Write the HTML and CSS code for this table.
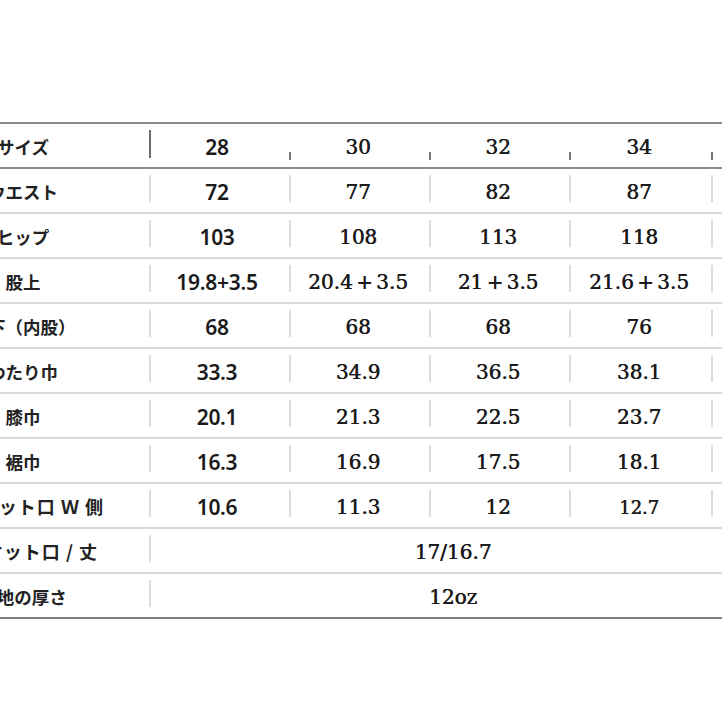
FILE: index.html
```html
<!DOCTYPE html>
<html lang="ja">
<head>
<meta charset="utf-8">
<title>サイズ表</title>
<link rel="stylesheet" href="styles.css">
</head>
<body>
<div class="sheet">
  <div class="table">
    <div class="row head">
      <div class="label">サイズ</div>
      <div class="cell first">28</div>
      <div class="cell">30</div>
      <div class="cell">32</div>
      <div class="cell">34</div>
      <div class="cell"></div>
    </div>
    <div class="row">
      <div class="label">ウエスト</div>
      <div class="cell first">72</div>
      <div class="cell">77</div>
      <div class="cell">82</div>
      <div class="cell">87</div>
      <div class="cell"></div>
    </div>
    <div class="row">
      <div class="label">ヒップ</div>
      <div class="cell first">103</div>
      <div class="cell">108</div>
      <div class="cell">113</div>
      <div class="cell">118</div>
      <div class="cell"></div>
    </div>
    <div class="row">
      <div class="label">股上</div>
      <div class="cell first">19.8+3.5</div>
      <div class="cell">20.4&#8198;+&#8198;3.5</div>
      <div class="cell">21&#8198;+&#8198;3.5</div>
      <div class="cell">21.6&#8198;+&#8198;3.5</div>
      <div class="cell"></div>
    </div>
    <div class="row">
      <div class="label">股下（内股）</div>
      <div class="cell first">68</div>
      <div class="cell">68</div>
      <div class="cell">68</div>
      <div class="cell">76</div>
      <div class="cell"></div>
    </div>
    <div class="row">
      <div class="label">わたり巾</div>
      <div class="cell first">33.3</div>
      <div class="cell">34.9</div>
      <div class="cell">36.5</div>
      <div class="cell">38.1</div>
      <div class="cell"></div>
    </div>
    <div class="row">
      <div class="label">膝巾</div>
      <div class="cell first">20.1</div>
      <div class="cell">21.3</div>
      <div class="cell">22.5</div>
      <div class="cell">23.7</div>
      <div class="cell"></div>
    </div>
    <div class="row">
      <div class="label">裾巾</div>
      <div class="cell first">16.3</div>
      <div class="cell">16.9</div>
      <div class="cell">17.5</div>
      <div class="cell">18.1</div>
      <div class="cell"></div>
    </div>
    <div class="row">
      <div class="label pocket">前ポケット口 Ｗ 側</div>
      <div class="cell first">10.6</div>
      <div class="cell">11.3</div>
      <div class="cell">12</div>
      <div class="cell small">12.7</div>
      <div class="cell"></div>
    </div>
    <div class="row">
      <div class="label pocket2">後ポケット口 / 丈</div>
      <div class="cell span">17/16.7</div>
    </div>
    <div class="row last">
      <div class="label">生地の厚さ</div>
      <div class="cell span">12oz</div>
    </div>
  </div>
</div>
</body>
</html>
```

FILE: styles.css
```css
html, body {
  margin: 0;
  padding: 0;
  background: #ffffff;
  overflow: hidden;
}

.sheet {
  width: 722px;
  height: 722px;
  overflow: hidden;
  padding-top: 122px;
  box-sizing: border-box;
}

.table {
  width: 860px;
  margin-left: -104px;
  border-top: 2px solid #8a8a8a;
}

.row {
  display: grid;
  grid-template-columns: 254px 140px 140px 140px 142px 44px;
  height: 43px;
  border-bottom: 2px solid #d9d9d9;
  color: #1c1c1c;
}

.row.head {
  border-bottom: 2px solid #8c8c8c;
}

.row.last {
  border-bottom: 2px solid #7f7f7f;
}

.label {
  display: flex;
  align-items: center;
  justify-content: center;
  padding-top: 1px;
  font-family: "Noto Sans CJK JP", sans-serif;
  font-weight: 700;
  font-size: 17.5px;
  white-space: nowrap;
  color: #222;
}

.label.pocket,
.label.pocket2 {
  justify-content: flex-end;
  font-size: 18px;
  letter-spacing: 1px;
}

.label.pocket {
  padding-right: 46px;
}

.label.pocket2 {
  padding-right: 52px;
}

.cell {
  position: relative;
  display: flex;
  align-items: center;
  justify-content: center;
  padding-top: 3px;
  font-family: "DejaVu Serif", serif;
  font-weight: 400;
  font-size: 20px;
  color: #1a1a1a;
  text-shadow: 0.5px 0 0 #1a1a1a;
  white-space: nowrap;
  padding-right: 4px;
}

.cell.first {
  font-family: "Noto Sans", sans-serif;
  font-weight: 600;
  font-size: 21px;
  letter-spacing: -0.3px;
  padding-right: 6px;
  color: #1a1a1a;
  text-shadow: none;
}

.cell.small {
  font-size: 18px;
}

.cell.span {
  grid-column: 2 / span 5;
  padding-right: 0;
}

.cell::before {
  content: "";
  position: absolute;
  left: -1px;
  top: 6px;
  height: 27px;
  width: 2px;
  background: #dcdcdc;
}

.head .cell::before {
  top: 28px;
  height: 8px;
  background: #777;
}

.head .cell.first::before {
  top: 6px;
  height: 28px;
  background: #6a6a6a;
}
```
